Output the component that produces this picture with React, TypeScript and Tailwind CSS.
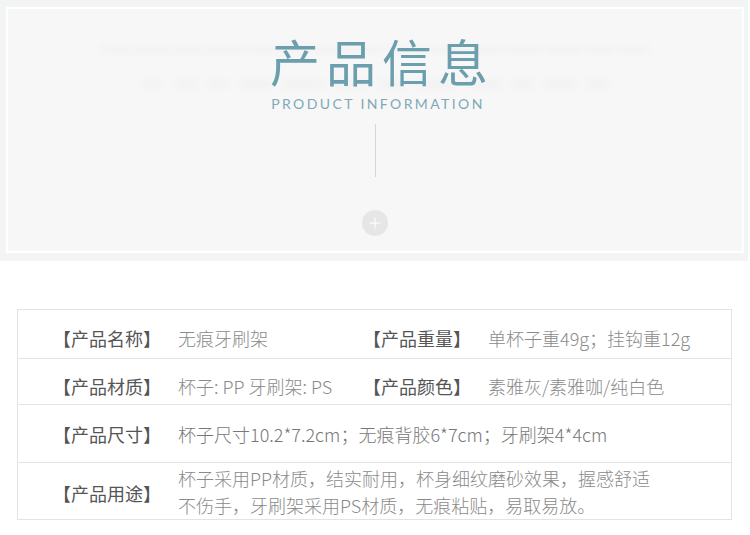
import React from 'react';

const cjk = { fontFamily: '"Noto Sans CJK SC", "Noto Sans", sans-serif' };
const latin = { fontFamily: 'Lato, "Noto Sans", sans-serif' };

const Label = ({ text }: { text: string }) => (
  <div className="shrink-0 w-[125px] text-[18px] font-normal text-[#555555] leading-none" style={cjk}>
    【{text}】
  </div>
);

const Value = ({ children, w }: { children: React.ReactNode; w?: string }) => (
  <div className={`text-[18px] font-light text-[#8a8a8a] leading-none ${w ?? ''}`} style={cjk}>
    {children}
  </div>
);

// faint blurred marks behind the heading
const marksTop = [28, 36, 28, 36, 60, 70, 40, 36, 30, 40, 36, 28, 28];
const marksBottom = [20, 20, 20, 30, 40, 30, 26, 40, 30, 20, 30, 20];

const App = () => {
  return (
    <div className="w-[750px] h-[535px] bg-white overflow-hidden">
      {/* header block */}
      <div className="mr-[2px] h-[261px] bg-[#f3f5f5] pt-[7px] pl-[6px] pr-[4px]">
        <div className="relative h-[246px] bg-[#f7f7f7] border-2 border-white flex flex-col items-center overflow-hidden">
          <div className="absolute left-[94px] right-[94px] top-[38px] flex justify-between blur-[3px]">
            {marksTop.map((w, i) => (
              <div key={i} className="h-[5px] bg-[#f1f1f1]" style={{ width: w }} />
            ))}
          </div>
          <div className="absolute left-[134px] right-[134px] top-[72px] flex justify-between blur-[3px]">
            {marksBottom.map((w, i) => (
              <div key={i} className="h-[6px] bg-[#f1f1f1]" style={{ width: w }} />
            ))}
          </div>

          <div
            className="relative mt-[26px] pl-[14px] text-[50px] leading-none tracking-[6px] text-[#6b9fad]"
            style={cjk}
          >
            产品信息
          </div>
          <div
            className="relative mt-[12px] pl-[6px] text-[14px] leading-none tracking-[2.4px] text-[#7eaab6]"
            style={latin}
          >
            PRODUCT INFORMATION
          </div>
          <div className="relative mt-[13px] w-px h-[53px] bg-[#d6d6d6]" />
          <div className="relative mt-[33px] w-[26px] h-[26px] rounded-full bg-[#e6e6e6] flex items-center justify-center">
            <svg width="12" height="12" viewBox="0 0 12 12">
              <path d="M6 0.5V11.5M0.5 6H11.5" stroke="#ffffff" strokeWidth="1" />
            </svg>
          </div>
        </div>
      </div>

      {/* info table */}
      <div className="ml-[17px] mr-[18px] mt-[48px] border border-[#e3e3e3]">
        <div className="h-[49px] pt-[8px] pl-[35px] flex items-center border-b border-[#e3e3e3]">
          <Label text="产品名称" />
          <Value w="w-[185px] shrink-0">无痕牙刷架</Value>
          <Label text="产品重量" />
          <Value>单杯子重49g；挂钩重12g</Value>
        </div>
        <div className="h-[46px] pt-[9px] pl-[35px] flex items-center border-b border-[#e3e3e3]">
          <Label text="产品材质" />
          <Value w="w-[185px] shrink-0">杯子: PP 牙刷架: PS</Value>
          <Label text="产品颜色" />
          <Value>素雅灰/素雅咖/纯白色</Value>
        </div>
        <div className="h-[58px] pl-[35px] flex items-center border-b border-[#e3e3e3]">
          <Label text="产品尺寸" />
          <div className="text-[18px] font-light text-[#777777] leading-none" style={cjk}>
            杯子尺寸10.2*7.2cm；无痕背胶6*7cm；牙刷架4*4cm
          </div>
        </div>
        <div className="h-[56px] pt-[3px] pl-[35px] flex items-center">
          <Label text="产品用途" />
          <div className="text-[18px] font-light text-[#8a8a8a] leading-[27px] -mt-[2px]" style={cjk}>
            <div>杯子采用PP材质，结实耐用，杯身细纹磨砂效果，握感舒适</div>
            <div>不伤手，牙刷架采用PS材质，无痕粘贴，易取易放。</div>
          </div>
        </div>
      </div>
    </div>
  );
};

export default App;
